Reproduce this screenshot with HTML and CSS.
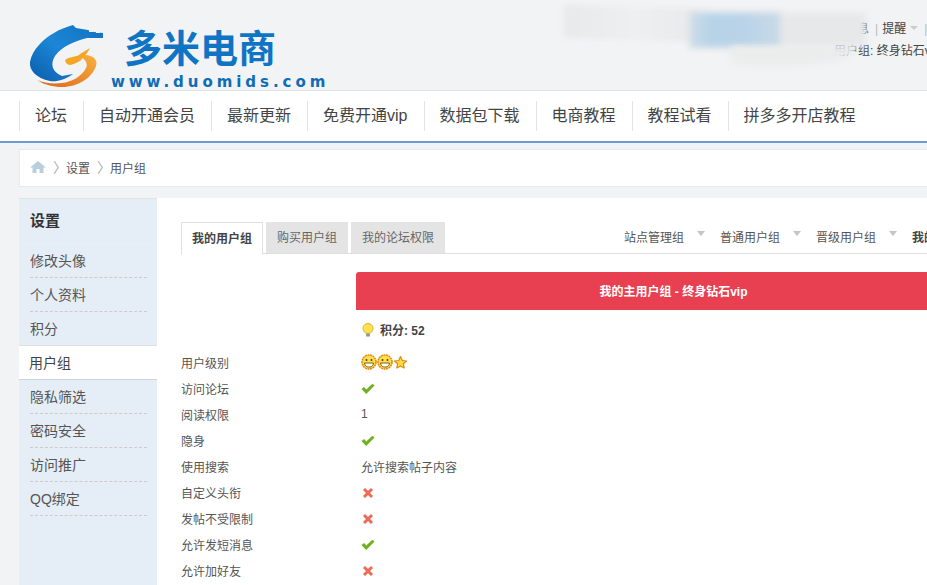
FILE: index.html
```html
<!DOCTYPE html>
<html lang="zh-CN">
<head>
    <meta charset="UTF-8">
    <title>用户组 - 多米电商</title>
    <link rel="stylesheet" href="styles.css">
</head>
<body>
<div class="header">
    <div class="logo">
        <svg class="logo_mark" width="76" height="66" viewBox="29 24 76 66">
            <defs>
                <linearGradient id="blueg" x1="0" y1="1" x2="1" y2="0">
                    <stop offset="0" stop-color="#0b5cab"/>
                    <stop offset="0.5" stop-color="#1c86d6"/>
                    <stop offset="1" stop-color="#1170c0"/>
                </linearGradient>
                <linearGradient id="orangeg" x1="0" y1="1" x2="1" y2="0">
                    <stop offset="0" stop-color="#e0641a"/>
                    <stop offset="1" stop-color="#f6b23e"/>
                </linearGradient>
            </defs>
            <path d="M73 25 L76 28 L88 30 L94 32 L103 33 L103 38 L87 38 C75 41 62 46 55 56 C50 64 52 72 62 76 L73 74 C65 80 56 82 50 81 C36 78 29 70 30 62 C32 50 44 38 54 33 C60 29 67 27 73 25 Z" fill="url(#blueg)"/>
            <path d="M37 80 C46 86 56 87 62 87 C78 87 92 78 96 66 C98 60 94 56 86 55 L80 56 C86 60 88 64 86 68 C82 76 72 82 62 83 C52 84 44 83 37 80 Z" fill="url(#orangeg)"/>
            <path d="M65 60 C70 56 78 57 80 54 L90 48 C88 52 86 54 84 57 L80 61 C76 63 72 65 69 65 L66 63 Z" fill="#f5a623"/>
            <rect x="77" y="26" width="4" height="2" fill="#f1f3f5"/>
            <rect x="83" y="27" width="4" height="2" fill="#f1f3f5"/>
            <rect x="89" y="30" width="4" height="2" fill="#f1f3f5"/>
            <rect x="96" y="31" width="4" height="2" fill="#f1f3f5"/>
        </svg>
        <div class="logo_name">多米电商</div>
        <div class="logo_url">www.duomids.com</div>
    </div>
    <div class="user_links">
        <span class="ul_cut">息</span><span class="ul_sep">|</span>提醒<i class="ul_arrow"></i><span class="ul_sep">|</span>
    </div>
    <div class="user_group">用户组: 终身钻石vip</div>
    <div class="smear smear_a"></div>
    <div class="smear smear_b"></div>
    <div class="smear smear_c"></div>
    <div class="smear smear_d"></div>
</div>

<div class="nav">
    <a>论坛</a>
    <a>自动开通会员</a>
    <a>最新更新</a>
    <a>免费开通vip</a>
    <a>数据包下载</a>
    <a>电商教程</a>
    <a>教程试看</a>
    <a>拼多多开店教程</a>
</div>

<div class="crumb">
    <svg class="home" width="16" height="12" viewBox="0 0 16 12">
        <path d="M8 0 L16 6.5 H13.5 V12 H9.5 V8 H6.5 V12 H2.5 V6.5 H0 Z" fill="#b9cfe0"/>
    </svg>
    <span class="crumb_arrow">〉</span>
    <span>设置</span>
    <span class="crumb_arrow">〉</span>
    <span>用户组</span>
</div>

<div class="content">
    <div class="side">
        <h2>设置</h2>
        <ul>
            <li>修改头像</li>
            <li>个人资料</li>
            <li class="no_line">积分</li>
            <li class="active">用户组</li>
            <li>隐私筛选</li>
            <li>密码安全</li>
            <li>访问推广</li>
            <li>QQ绑定</li>
        </ul>
    </div>

    <div class="main">
        <div class="tabs">
            <a class="tab tab_on">我的用户组</a>
            <a class="tab">购买用户组</a>
            <a class="tab">我的论坛权限</a>
            <div class="tab_right">
                <span class="drop">站点管理组<i></i></span>
                <span class="drop">普通用户组<i></i></span>
                <span class="drop">晋级用户组<i></i></span>
                <span class="drop drop_on">我的用户组</span>
            </div>
        </div>

        <div class="banner">我的主用户组 - 终身钻石vip</div>

        <div class="points">
            <svg width="14" height="14" viewBox="0 0 14 14">
                <circle cx="7" cy="5.5" r="5" fill="#fde24f" stroke="#e0b520"/>
                <rect x="5" y="10.5" width="4" height="3" fill="#999"/>
            </svg>
            <b>积分: 52</b>
        </div>

        <div class="row">
            <div class="row_label">用户级别</div>
            <div class="row_val">
                <svg width="16" height="16" viewBox="0 0 16 16">
                    <circle cx="8" cy="8" r="7" fill="#ffe14d" stroke="#e8890c" stroke-width="1.6" stroke-dasharray="2 0.6"/>
                    <circle cx="5.5" cy="6" r="1" fill="#5a3a00"/><circle cx="10.5" cy="6" r="1" fill="#5a3a00"/>
                    <path d="M3.5 9 H12.5 C12 12.5 10 13 8 13 C6 13 4 12.5 3.5 9 Z" fill="#fff" stroke="#5a3a00" stroke-width="0.8"/>
                </svg>
                <svg width="16" height="16" viewBox="0 0 16 16">
                    <circle cx="8" cy="8" r="7" fill="#ffe14d" stroke="#e8890c" stroke-width="1.6" stroke-dasharray="2 0.6"/>
                    <circle cx="5.5" cy="6" r="1" fill="#5a3a00"/><circle cx="10.5" cy="6" r="1" fill="#5a3a00"/>
                    <path d="M3.5 9 H12.5 C12 12.5 10 13 8 13 C6 13 4 12.5 3.5 9 Z" fill="#fff" stroke="#5a3a00" stroke-width="0.8"/>
                </svg>
                <svg width="15" height="15" viewBox="0 0 15 15">
                    <path d="M7.5 1.5 L9.3 5.5 L13.5 6 L10.4 8.8 L11.2 13 L7.5 10.9 L3.8 13 L4.6 8.8 L1.5 6 L5.7 5.5 Z" fill="#ffdc45" stroke="#dc8a12" stroke-width="1.2" stroke-linejoin="round"/>
                </svg>
            </div>
        </div>
        <div class="row">
            <div class="row_label">访问论坛</div>
            <div class="row_val"><svg class="yes" width="14" height="12" viewBox="0 0 14 12"><path d="M0.5 6 L3 4 L5.3 6.4 L11.5 0.8 L13.5 2.5 L5.2 11 Z" fill="#6fb01e"/></svg></div>
        </div>
        <div class="row">
            <div class="row_label">阅读权限</div>
            <div class="row_val">1</div>
        </div>
        <div class="row">
            <div class="row_label">隐身</div>
            <div class="row_val"><svg class="yes" width="14" height="12" viewBox="0 0 14 12"><path d="M0.5 6 L3 4 L5.3 6.4 L11.5 0.8 L13.5 2.5 L5.2 11 Z" fill="#6fb01e"/></svg></div>
        </div>
        <div class="row">
            <div class="row_label">使用搜索</div>
            <div class="row_val">允许搜索帖子内容</div>
        </div>
        <div class="row">
            <div class="row_label">自定义头衔</div>
            <div class="row_val"><svg class="no" width="12" height="12" viewBox="0 0 12 12"><path d="M2 2 L10 10 M10 2 L2 10" stroke="#ee6a55" stroke-width="3"/></svg></div>
        </div>
        <div class="row">
            <div class="row_label">发帖不受限制</div>
            <div class="row_val"><svg class="no" width="12" height="12" viewBox="0 0 12 12"><path d="M2 2 L10 10 M10 2 L2 10" stroke="#ee6a55" stroke-width="3"/></svg></div>
        </div>
        <div class="row">
            <div class="row_label">允许发短消息</div>
            <div class="row_val"><svg class="yes" width="14" height="12" viewBox="0 0 14 12"><path d="M0.5 6 L3 4 L5.3 6.4 L11.5 0.8 L13.5 2.5 L5.2 11 Z" fill="#6fb01e"/></svg></div>
        </div>
        <div class="row">
            <div class="row_label">允许加好友</div>
            <div class="row_val"><svg class="no" width="12" height="12" viewBox="0 0 12 12"><path d="M2 2 L10 10 M10 2 L2 10" stroke="#ee6a55" stroke-width="3"/></svg></div>
        </div>
    </div>
</div>
</body>
</html>
```

FILE: styles.css
```css
html, body {
    margin: 0;
    height: 585px;
    overflow: hidden;
}

body {
    width: 927px;
    background-color: #f1f3f5;
    color: #444;
    font-family: "Liberation Sans", "Noto Sans CJK SC", sans-serif;
    font-size: 12px;
}

.header {
    position: relative;
    height: 90px;
    border-bottom: 1px solid #dfe1e3;
    overflow: hidden;
}

.logo {
    position: relative;
    height: 90px;
}

.logo_mark {
    position: absolute;
    left: 29px;
    top: 24px;
}

.logo_name {
    position: absolute;
    left: 124px;
    top: 26px;
    color: #0f74c4;
    font-size: 38px;
    line-height: 46px;
    font-weight: 700;
    white-space: nowrap;
}

.logo_url {
    position: absolute;
    left: 111px;
    top: 73px;
    color: #0f6cb6;
    font-family: "DejaVu Sans", sans-serif;
    font-size: 15px;
    line-height: 18px;
    font-weight: 700;
    letter-spacing: 3.95px;
    white-space: nowrap;
}

.user_links {
    position: absolute;
    left: 863px;
    top: 21px;
    line-height: 16px;
    white-space: nowrap;
}

.ul_sep {
    margin: 0 4px 0 6px;
    color: #bbb;
}

.ul_arrow {
    display: inline-block;
    margin-left: 4px;
    vertical-align: 3px;
    border: 4px solid transparent;
    border-top: 4px solid #ccc;
    border-bottom: 0;
}

.ul_cut {
    margin-left: -6px;
}

.user_group {
    position: absolute;
    left: 834px;
    top: 43px;
    line-height: 16px;
    white-space: nowrap;
}

.smear {
    position: absolute;
    filter: blur(3px);
}

.smear_a {
    left: 564px;
    top: 7px;
    width: 140px;
    height: 33px;
    background: linear-gradient(90deg, #e8e9ea, #eeeff0 70px, #e9eaeb 130px);
    transform: skewY(2deg);
}

.smear_b {
    left: 690px;
    top: 13px;
    width: 176px;
    height: 34px;
    background-color: #e7e8e9;
}

.smear_c {
    left: 690px;
    top: 13px;
    width: 90px;
    height: 34px;
    background: linear-gradient(90deg, #cfdde8, #b7d3e8 20px, #b9d3e8 60%, #c9dae6);
}

.smear_d {
    left: 730px;
    top: 46px;
    width: 125px;
    height: 20px;
    background-color: #ebecec;
    border-radius: 0 0 100% 40%;
}

.nav {
    display: flex;
    align-items: center;
    height: 50px;
    padding-left: 19px;
    background-color: #fff;
    border-bottom: 2px solid #6f9bd1;
}

.nav a {
    height: 30px;
    padding: 0 16px 0 15px;
    border-left: 1px solid #e3e3e3;
    color: #444;
    font-size: 16px;
    line-height: 30px;
    white-space: nowrap;
}

.crumb {
    display: flex;
    align-items: center;
    width: 908px;
    height: 38px;
    margin: 6px 0 0 19px;
    padding: 0 0 2px 10px;
    box-sizing: border-box;
    background-color: #fff;
    border: 1px solid #e8e9ea;
    border-right: 0;
    color: #555;
}

.crumb_arrow {
    width: 20px;
    box-sizing: border-box;
    padding-left: 7px;
    color: #aaa;
    font-size: 14px;
    line-height: 14px;
    white-space: nowrap;
}

.content {
    display: flex;
    margin: 11px 0 0 19px;
    height: 400px;
}

.side {
    width: 138px;
    box-sizing: border-box;
    background-color: #e5edf6;
    border-top: 1px solid #e1e4e7;
    flex-shrink: 0;
}

.side h2 {
    margin: 0;
    padding-left: 11px;
    height: 44px;
    color: #333;
    font-size: 15px;
    line-height: 44px;
    border-bottom: 1px solid #e9eff6;
}

.side ul {
    margin: 0;
    padding: 0;
    list-style: none;
}

.side li {
    height: 33px;
    margin: 0 10px 0 11px;
    color: #555;
    font-size: 14px;
    line-height: 34px;
    border-bottom: 1px dashed #ccc;
}

.side li.no_line {
    height: 33px;
    border-bottom: 0;
}

.side li.active {
    margin: 0;
    padding-left: 10px;
    height: 33px;
    background-color: #fff;
    border-top: 1px solid #dfe2e5;
    border-bottom: 1px solid #cfd3d8;
    color: #444;
}

.main {
    position: relative;
    flex: 1;
    background-color: #fff;
    padding: 24px 0 0 24px;
    min-width: 0;
}

.tabs {
    display: flex;
    gap: 3px;
    height: 31px;
    border-bottom: 1px solid #e0e0e0;
    white-space: nowrap;
}

.tab {
    flex-shrink: 0;
    height: 31px;
    padding: 0 11px;
    background-color: #e4e4e4;
    color: #666;
    line-height: 33px;
}

.tab_on {
    height: 31px;
    border: 1px solid #e0e0e0;
    border-bottom: 1px solid #fff;
    background-color: #fff;
    color: #444;
    font-weight: 700;
    line-height: 32px;
    padding: 0 10px;
}

.tab_right {
    display: flex;
    flex-shrink: 0;
    margin-left: 176px;
    white-space: nowrap;
}

.drop {
    width: 96px;
    flex-shrink: 0;
    color: #555;
    line-height: 33px;
}

.drop i {
    display: inline-block;
    margin-left: 13px;
    vertical-align: 6px;
    border: 4.5px solid transparent;
    border-top: 5px solid #c4c4c4;
    border-bottom: 0;
}

.drop_on {
    color: #444;
    font-weight: 700;
}

.banner {
    width: 571px;
    height: 38px;
    margin: 18px 0 0 175px;
    padding-left: 64px;
    box-sizing: border-box;
    background-color: #e94051;
    border-radius: 3px 0 0 0;
    color: #fff;
    font-weight: 700;
    line-height: 40px;
    text-align: center;
    white-space: nowrap;
}

.points {
    display: flex;
    align-items: center;
    gap: 5px;
    height: 39px;
    margin-left: 180px;
}

.row {
    display: flex;
    align-items: center;
    height: 26px;
}

.row_label {
    width: 180px;
    color: #555;
}

.row_val {
    display: flex;
    align-items: center;
    color: #555;
}

.yes, .no {
    display: block;
    margin-top: 2px;
}

.no {
    margin-left: 1px;
}
```
